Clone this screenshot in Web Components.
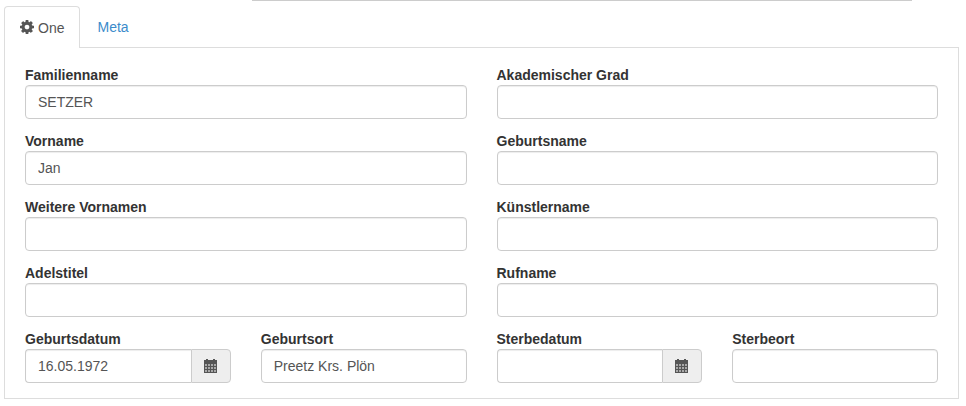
<!DOCTYPE html>
<html lang="de">
<head>
<meta charset="utf-8">
<title>Person</title>
<style>
  html, body { margin:0; background:#fff; }
  body { font:14px/20px "Liberation Sans", Arial, sans-serif; color:#555; }
</style>
</head>
<body>
<person-form>
  <form-tabs>
    <form-columns>
      <div>
        <form-field label="Familienname" value="SETZER"></form-field>
        <form-field label="Vorname" value="Jan"></form-field>
        <form-field label="Weitere Vornamen"></form-field>
        <form-field label="Adelstitel"></form-field>
        <form-columns class="last">
          <form-field label="Geburtsdatum" value="16.05.1972" date></form-field>
          <form-field label="Geburtsort" value="Preetz Krs. Plön"></form-field>
        </form-columns>
      </div>
      <div>
        <form-field label="Akademischer Grad"></form-field>
        <form-field label="Geburtsname"></form-field>
        <form-field label="Künstlername"></form-field>
        <form-field label="Rufname"></form-field>
        <form-columns class="last">
          <form-field label="Sterbedatum" date></form-field>
          <form-field label="Sterbeort"></form-field>
        </form-columns>
      </div>
    </form-columns>
  </form-tabs>
</person-form>

<script>
const calendarIcon = `
  <svg width="13" height="14" viewBox="0 0 13 14" aria-hidden="true">
    <path fill="#555" d="M0 1h2V0h2v1h5V0h2v1h2v13H0z"/>
    <path fill="#a8a8a8" d="M1 5h2v2H1zm3 0h2v2H4zm3 0h2v2H7zm3 0h2v2h-2zM1 8h2v2H1zm3 0h2v2H4zm3 0h2v2H7zm3 0h2v2h-2zM1 11h2v2H1zm3 0h2v2H4zm3 0h2v2H7zm3 0h2v2h-2z"/>
  </svg>`;

class PersonForm extends HTMLElement {
    constructor() {
        super();
        this.attachShadow({ mode: 'open' }).innerHTML = `
          <style>
            :host { display:block; }
            .rule { height:1px; margin-left:252px; width:660px; background:#ccc; }
          </style>
          <div class="rule"></div>
          <slot></slot>`;
    }
}

class FormTabs extends HTMLElement {
    constructor() {
        super();
        this.attachShadow({ mode: 'open' }).innerHTML = `
          <style>
            :host { display:block; margin:5px 7px 0 4px; }
            .tabs { display:flex; height:41px; }
            a { display:flex; align-items:center; gap:4px; padding:0 15px; text-decoration:none; color:#3b8bcb; font-size:14px; cursor:pointer; }
            a.active { color:#555; background:#fff; border:1px solid #ddd; border-bottom:0; border-radius:4px 4px 0 0; height:42px; box-sizing:border-box; position:relative; z-index:1; margin-right:2px; }
            svg { display:block; margin-top:-2px; }
            .panel { border:1px solid #ddd; padding:20px 20px 0; height:352px; box-sizing:border-box; }
          </style>
          <nav class="tabs">
            <a class="active">
              <svg width="14" height="14" viewBox="0 0 1536 1536" fill="#555" aria-hidden="true"><path d="M1024 768q0-106-75-181t-181-75-181 75-75 181 75 181 181 75 181-75 75-181zm512-109v222q0 12-8 23t-20 13l-185 28q-19 54-39 91 35 50 107 138 10 12 10 25t-9 23q-27 37-99 108t-94 71q-12 0-26-9l-138-108q-44 23-91 38-16 136-29 186-7 28-36 28h-222q-14 0-24.500-8.500t-11.500-21.500l-28-184q-49-16-90-37l-141 107q-10 9-25 9-14 0-25-11-126-114-165-168-7-10-7-23 0-12 8-23 15-21 51-66.500t54-70.500q-27-50-41-99l-183-27q-13-2-21-12.500t-8-23.500v-222q0-12 8-23t19-13l186-28q14-46 39-92-40-57-107-138-10-12-10-24 0-10 9-23 26-36 98.500-107.500t94.500-71.500q13 0 26 10l138 107q44-23 91-38 16-136 29-186 7-28 36-28h222q14 0 24.500 8.500t11.500 21.500l28 184q49 16 90 37l142-107q9-9 24-9 13 0 25 10 129 119 165 170 7 8 7 22 0 12-8 23-15 21-51 66.500t-54 70.500q26 50 41 98l183 28q13 2 21 12.500t8 23.500z"/></svg>
              One
            </a>
            <a>Meta</a>
          </nav>
          <div class="panel"><slot></slot></div>`;
    }
}

class FormColumns extends HTMLElement {
    constructor() {
        super();
        this.attachShadow({ mode: 'open' }).innerHTML = `
          <style>
            :host { display:grid; grid-template-columns:1fr 1fr; column-gap:30px; }
          </style>
          <slot></slot>`;
    }
}

class FormField extends HTMLElement {
    constructor() {
        super();
        const root = this.attachShadow({ mode: 'open' });
        const date = this.hasAttribute('date');
        root.innerHTML = `
          <style>
            :host { display:block; margin-bottom:15px; min-width:0; }
            label { display:block; font-weight:700; font-size:14px; line-height:15px; padding-bottom:2px; color:#333; }
            .group { display:flex; height:34px; }
            input { flex:1; min-width:0; box-sizing:border-box; height:34px; padding:6px 12px; border:1px solid #ccc; border-radius:4px; font:14px/20px "Liberation Sans", Arial, sans-serif; color:#555; background:#fff; box-shadow:inset 0 1px 1px rgba(0,0,0,.075); outline:0; }
            .date input { border-radius:4px 0 0 4px; border-right:0; }
            .addon { flex:none; box-sizing:border-box; width:40px; display:flex; align-items:center; justify-content:center; padding-right:1px; background:#eee; border:1px solid #ccc; border-radius:0 4px 4px 0; }
            svg { display:block; }
          </style>
          <label></label>
          <div class="group${date ? ' date' : ''}">
            <input type="text">
            ${date ? `<span class="addon">${calendarIcon}</span>` : ''}
          </div>`;
        root.querySelector('label').textContent = this.getAttribute('label');
        root.querySelector('input').setAttribute('value', this.getAttribute('value') || '');
    }
}

customElements.define('person-form', PersonForm);
customElements.define('form-tabs', FormTabs);
customElements.define('form-columns', FormColumns);
customElements.define('form-field', FormField);
</script>
</body>
</html>
